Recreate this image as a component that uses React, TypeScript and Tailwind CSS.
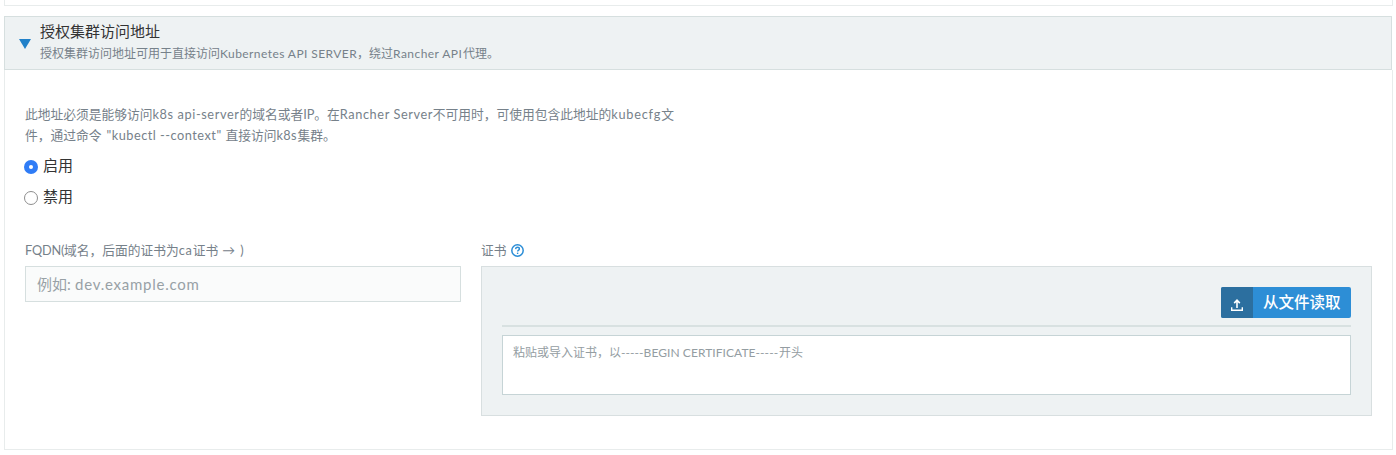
import React from 'react';

type SegProps = { className: string; children: React.ReactNode };

/** A run of Latin text set inside a Chinese sentence. */
function Latin({ className, children }: SegProps) {
  return <span className={`inline-block whitespace-pre ${className}`}>{children}</span>;
}

function HelpIcon() {
  return (
    <svg className="mt-px block size-[13px]" viewBox="0 0 13 13" fill="none" stroke="#2b8dd6">
      <circle cx="6.5" cy="6.5" r="5.7" strokeWidth="1.5" />
      <path d="M4.6 5.1C4.7 3.9 5.5 3.3 6.5 3.3c1.1 0 1.9.7 1.9 1.6 0 1.2-1.8 1.3-1.8 2.7" strokeWidth="1.4" />
      <path d="M6.6 8.6v1.4" strokeWidth="1.4" />
    </svg>
  );
}

function UploadIcon() {
  return (
    <svg className="block size-[12px]" viewBox="0 0 12 12" fill="none" stroke="#fff">
      <path d="M.7 8.2v3.1h10.6V8.2" strokeWidth="1.4" />
      <path d="M6 9V1.2M3.2 4.1 6 1.2l2.8 2.9" strokeWidth="1.6" />
    </svg>
  );
}

export default function App() {
  return (
    <div className="h-[455px] w-[1396px] overflow-hidden bg-white pl-1 font-['Lato','Noto_Sans_CJK_SC',sans-serif] text-[#76818a]">
      <div className="h-[6px] w-[1389px] border-x border-b border-[#e8ecec]" />

      <section className="mt-[10px] h-[434px] w-[1389px]">
        <header className="flex h-[54px] w-[1388px] border border-[#d6dfdf] bg-[#eef2f3] pl-[14px]">
          <svg className="mt-[22px] h-[10px] w-[12px]" viewBox="0 0 12 10">
            <path d="M0 0h12L6 10z" fill="#2181c9" />
          </svg>
          <div className="ml-[9px]">
            <h2 className="mt-[4px] h-[21px] text-[15px] leading-5 text-[#333]">授权集群访问地址</h2>
            <p className="h-5 whitespace-nowrap text-[12px] leading-[23px]">
              授权集群访问地址可用于直接访问
              <Latin className="w-[137px] tracking-[0.42px]">Kubernetes API SERVER</Latin>
              ，绕过
              <Latin className="w-[70px] tracking-[0.45px]">Rancher API</Latin>
              代理。
            </p>
          </div>
        </header>

        <div className="h-[380px] border-x border-b border-[#e8ecec] px-5 pt-[34px]">
          <div className="whitespace-nowrap text-[12.75px] leading-[21px]">
            <p className="h-[21px]">
              此地址必须是能够访问
              <Latin className="w-[87px] tracking-[0.6px]">k8s api-server</Latin>
              的域名或者
              <Latin className="w-[11px]">IP</Latin>
              。在
              <Latin className="w-[93px] tracking-[0.6px]">Rancher Server</Latin>
              不可用时，可使用包含此地址的
              <Latin className="w-[50px] tracking-[0.75px]">kubecfg</Latin>
              文
            </p>
            <p className="h-[21px]">
              件，通过命令
              <Latin className="ml-[5px] w-[119px] tracking-[0.5px]">"kubectl --context"</Latin>
              直接访问
              <Latin className="w-[21px] tracking-[0.3px]">k8s</Latin>
              集群。
            </p>
          </div>

          <div className="mt-[9px] text-[15px] leading-[20px] text-[#333]">
            <label className="flex h-[20px] items-center">
              <span className="-ml-px mt-[3px] mr-[5px] flex size-[14px] items-center justify-center rounded-full bg-[#2f7cf6]">
                <span className="size-[4px] rounded-full bg-white" />
              </span>
              启用
            </label>
            <label className="mt-[11px] flex h-[20px] items-center">
              <span className="-ml-px mt-[3px] mr-[5px] size-[14px] rounded-full border border-[#8e8e8e] bg-white" />
              禁用
            </label>
          </div>

          <div className="mt-[34px] flex gap-5">
            <div className="w-[436px]">
              <div className="h-[20px] whitespace-nowrap text-[12.75px] leading-[20px]">
                <Latin className="w-[39px] tracking-[-0.2px]">FQDN(</Latin>
                域名，后面的证书为
                <Latin className="w-[14px] tracking-[0.6px]">ca</Latin>
                证书
                <Latin className="ml-[4px] w-[18px]">→</Latin>
                <Latin className="w-[5px]">)</Latin>
              </div>
              <div className="mt-[6px] h-[36px] border border-[#d6dfdf] bg-[#fafbfb] pl-[11px] text-[15px] leading-[34px] text-[#98a1a6]">
                例如
                <Latin className="w-[8px]">:</Latin>
                <Latin className="tracking-[0.75px]">dev.example.com</Latin>
              </div>
            </div>

            <div className="w-[891px]">
              <div className="flex h-[20px] items-center gap-1 text-[12.75px] leading-[20px]">
                证书 <HelpIcon />
              </div>
              <div className="mt-[6px] h-[150px] border border-[#d8dfe0] bg-[#eef2f3] px-5 pt-5">
                <div className="flex h-[40px] justify-end border-b-2 border-[#d8e1e1]">
                  <button className="flex h-[31px] w-[130px] overflow-hidden rounded-[2px] bg-[#2d8ed6] text-[15.5px] leading-[31px] text-white">
                    <span className="flex h-full w-8 items-center justify-center bg-[#2c6f9f] pt-[4px]">
                      <UploadIcon />
                    </span>
                    <span className="ml-[10px] font-medium">从文件读取</span>
                  </button>
                </div>
                <div className="mt-2 h-[60px] border border-[#c6d4d6] bg-white pl-[10px] pt-[7px] text-[12px] leading-[20px] whitespace-nowrap text-[#949da2]">
                  粘贴或导入证书，以
                  <Latin className="w-[158px] tracking-[0.06px]">-----BEGIN CERTIFICATE-----</Latin>
                  开头
                </div>
              </div>
            </div>
          </div>
        </div>
      </section>
    </div>
  );
}
